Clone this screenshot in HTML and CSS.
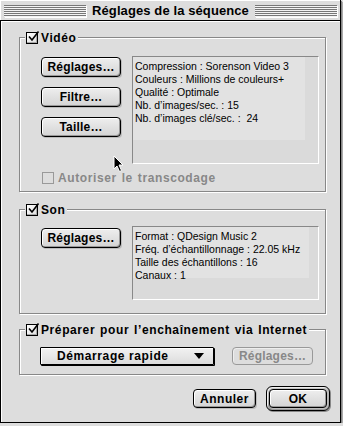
FILE: index.html
```html
<!DOCTYPE html>
<html lang="fr">
<head>
    <meta charset="UTF-8">
    <title>Réglages de la séquence</title>
    <link rel="stylesheet" href="styles.css">
</head>
<body>
    <div class="window">
        <div class="titlebar">
            <span class="stripes"></span>
            <span class="title">Réglages de la séquence</span>
            <span class="stripes"></span>
        </div>

        <div class="content">
            <!-- Vidéo -->
            <section class="group group-video">
                <div class="group-head">
                    <span class="check checked">
                        <svg viewBox="0 0 14 14" width="14" height="14"><path d="M3 6.5 L6 10 L12.5 1.5" fill="none" stroke="#000" stroke-width="1.6"/></svg>
                    </span>
                    Vidéo
                </div>
                <div class="group-body">
                    <div class="btn-col">
                        <button class="btn">Réglages…</button>
                        <button class="btn">Filtre…</button>
                        <button class="btn">Taille…</button>
                    </div>
                    <div class="info info-video">
                        <div class="info-text">
                            Compression : Sorenson Video 3<br>
                            Couleurs : Millions de couleurs+<br>
                            Qualité : Optimale<br>
                            Nb. d’images/sec. : 15<br>
                            Nb. d’images clé/sec. :&nbsp; 24
                        </div>
                    </div>
                </div>
                <div class="sub-check disabled">
                    <span class="check"></span>
                    Autoriser le transcodage
                </div>
            </section>

            <!-- Son -->
            <section class="group group-sound">
                <div class="group-head">
                    <span class="check checked">
                        <svg viewBox="0 0 14 14" width="14" height="14"><path d="M3 6.5 L6 10 L12.5 1.5" fill="none" stroke="#000" stroke-width="1.6"/></svg>
                    </span>
                    Son
                </div>
                <div class="group-body">
                    <div class="btn-col">
                        <button class="btn">Réglages…</button>
                    </div>
                    <div class="info info-sound">
                        <div class="info-text">
                            Format : QDesign Music 2<br>
                            Fréq. d’échantillonnage : 22.05 kHz<br>
                            Taille des échantillons : 16<br>
                            Canaux : 1
                        </div>
                    </div>
                </div>
            </section>

            <!-- Internet -->
            <section class="group group-web">
                <div class="group-head">
                    <span class="check checked">
                        <svg viewBox="0 0 14 14" width="14" height="14"><path d="M3 6.5 L6 10 L12.5 1.5" fill="none" stroke="#000" stroke-width="1.6"/></svg>
                    </span>
                    Préparer pour l’enchaînement via Internet
                </div>
                <div class="group-body web-body">
                    <div class="popup">
                        <span>Démarrage rapide</span>
                        <span class="arrow"></span>
                    </div>
                    <button class="btn btn-disabled">Réglages…</button>
                </div>
            </section>

            <div class="footer">
                <button class="btn btn-cancel">Annuler</button>
                <div class="default-ring">
                    <button class="btn btn-ok">OK</button>
                </div>
            </div>
        </div>

        <svg class="cursor" viewBox="0 0 12 18" width="12" height="18">
            <path d="M1 1 L1 14 L4 11 L6.5 16.5 L8.5 15.5 L6 10 L10 10 Z" fill="#000" stroke="#fff" stroke-width="1"/>
        </svg>
    </div>
</body>
</html>
```

FILE: styles.css
```css
body {
    margin: 0;
    background: #dddddd;
    font-family: "Liberation Sans", Arial, sans-serif;
    font-size: 12px;
    color: #000;
}
.window {
    position: relative;
    width: 340px;
    height: 422px;
    background: #dddddd;
    border-right: 1px solid #000;
    border-bottom: 1px solid #000;
    box-shadow: 1px 1px 0 #888, 2px 2px 0 #aaa;
}
.titlebar {
    height: 20px;
    display: flex;
    align-items: center;
    gap: 6px;
    padding: 0 3px 0 4px;
    border-bottom: 1px solid #000;
    box-shadow: inset 1px 1px 0 #fff;
}
.stripes {
    flex: 1;
    height: 12px;
    margin-top: 1px;
    background: repeating-linear-gradient(to bottom, #777 0 1px, #f4f4f4 1px 2px);
    box-shadow: 1px 1px 0 #fff;
}
.title {
    font-weight: bold;
    font-size: 13px;
    letter-spacing: 0.1px;
}
.content {
    padding: 16px 10px 0 18px;
    border-left: 1px solid #000;
    box-shadow: inset 1px 1px 0 #fff;
    height: 401px;
    box-sizing: border-box;
}

/* groupes */
.group {
    border: 1px solid #888;
    box-shadow: inset 1px 1px 0 #fff, 1px 1px 0 #fff;
    width: 305px;
}
.group-head {
    display: flex;
    align-items: center;
    gap: 3px;
    width: max-content;
    height: 13px;
    margin: -7px 0 0 5px;
    padding: 0 2px 0 1px;
    background: #dddddd;
    font-weight: bold;
    font-size: 12px;
    letter-spacing: 0.6px;
    word-spacing: 1px;
}
.group-body {
    display: flex;
    align-items: flex-start;
    gap: 11px;
    padding: 12px 6px 0 21px;
}
.group-video {
    padding-bottom: 7px;
}
.group-sound {
    margin-top: 17px;
    padding-bottom: 13px;
}
.group-sound .group-body {
    padding-top: 10px;
}
.group-web {
    margin-top: 15px;
    padding-bottom: 9px;
}

/* cases à cocher */
.check {
    position: relative;
    display: inline-block;
    flex: none;
    width: 10px;
    height: 10px;
    border: 1px solid #000;
    background: linear-gradient(135deg, #fff, #ddd);
    box-shadow: inset -1px -1px 0 #aaa;
}
.check svg {
    position: absolute;
    left: -1px;
    top: -3px;
}
.sub-check {
    display: flex;
    align-items: center;
    gap: 4px;
    height: 12px;
    margin: 8px 0 0 22px;
    font-weight: bold;
    letter-spacing: 0.6px;
    word-spacing: 1px;
}
.disabled {
    color: #888;
}
.disabled .check {
    border-color: #999;
    background: #ddd;
    box-shadow: none;
}

/* boutons */
.btn-col {
    display: flex;
    flex-direction: column;
    gap: 10px;
    padding-top: 1px;
}
.group-sound .btn-col {
    padding-top: 2px;
}
.btn {
    width: 80px;
    height: 20px;
    padding: 0;
    border: 1px solid #000;
    border-radius: 4px;
    background: linear-gradient(to bottom, #eeeeee, #d4d4d4);
    box-shadow: inset 1px 1px 0 #fff, inset -1px -1px 0 #999, 1px 1px 0 #bbb;
    font-family: inherit;
    font-size: 12px;
    font-weight: bold;
    letter-spacing: 0.2px;
    color: #000;
}
.btn-disabled {
    width: 81px;
    height: 18px;
    border-color: #999;
    color: #888;
    background: #dddddd;
    box-shadow: inset 1px 1px 0 #eee;
}

/* zones d'info */
.info {
    width: 185px;
    border: 1px solid;
    border-color: #888 #fff #fff #888;
    background: #dadada;
}
.info-video {
    height: 106px;
}
.info-sound {
    height: 72px;
}
.info-text {
    background: #e2e2e2;
    padding: 3px 0 0 2px;
    font-size: 10.5px;
    line-height: 13px;
    white-space: nowrap;
}
.info-video .info-text {
    width: 170px;
    height: 80px;
}
.info-sound .info-text {
    width: 174px;
    height: 48px;
}

/* menu local */
.web-body {
    gap: 18px;
    padding: 11px 0 0 20px;
}
.popup {
    display: flex;
    align-items: center;
    justify-content: space-between;
    box-sizing: border-box;
    width: 174px;
    height: 18px;
    padding: 0 9px 0 16px;
    border: 1px solid #000;
    border-radius: 1px;
    background: linear-gradient(to bottom, #f2f2f2, #dcdcdc);
    box-shadow: inset 1px 1px 0 #fff, 1px 1px 0 #000;
    font-weight: bold;
    letter-spacing: 0.6px;
}
.arrow {
    width: 0;
    height: 0;
    border-left: 5px solid transparent;
    border-right: 5px solid transparent;
    border-top: 6px solid #000;
}

/* pied */
.footer {
    display: flex;
    justify-content: flex-end;
    align-items: center;
    gap: 10px;
    margin-top: 11px;
}
.btn-cancel {
    width: 63px;
    height: 19px;
    letter-spacing: 0.5px;
}
.default-ring {
    padding: 2px;
    border: 1px solid #000;
    border-radius: 6px;
    background: linear-gradient(to bottom, #c8c8c8, #999);
    box-shadow: inset 1px 1px 0 #eee, 1px 1px 0 #888;
}
.btn-ok {
    width: 58px;
    height: 19px;
    display: block;
}

.cursor {
    position: absolute;
    left: 113px;
    top: 155px;
}
```
